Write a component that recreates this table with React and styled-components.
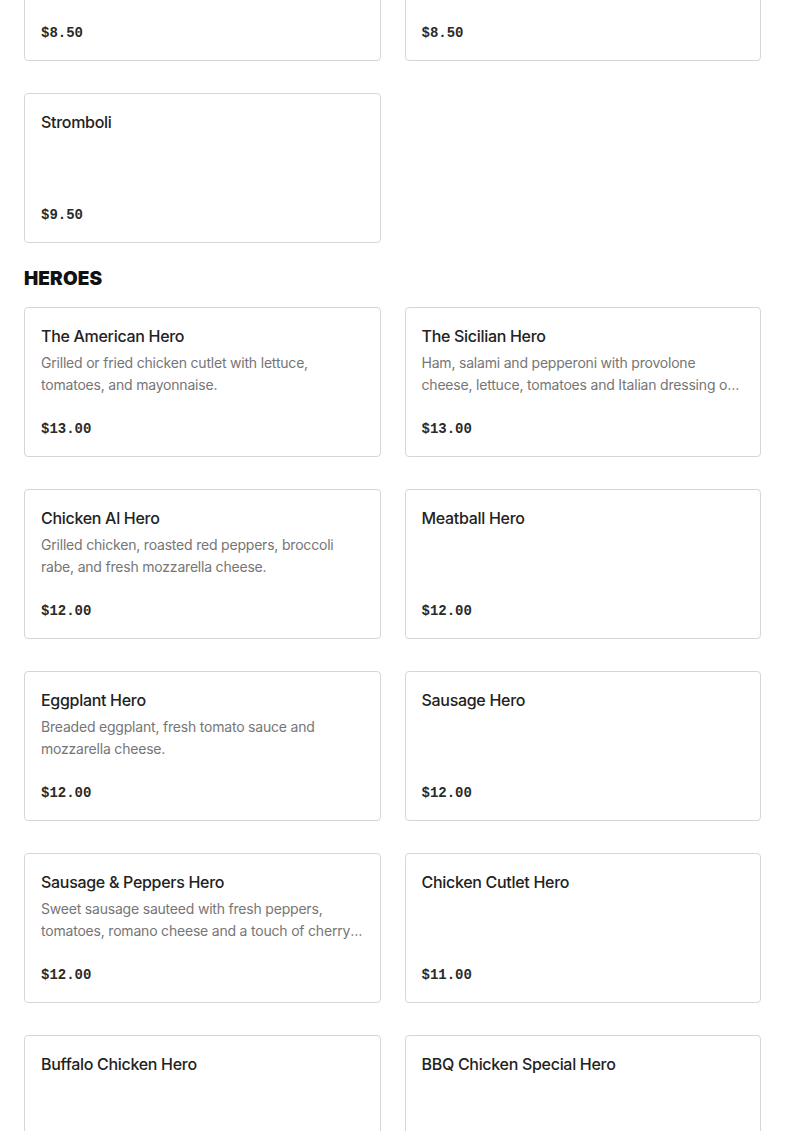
import React from "react";
import styled, { createGlobalStyle } from "styled-components";

const Global = createGlobalStyle`
  html, body { margin: 0; padding: 0; background: #fff; }
  body { font-family: Inter, "Noto Sans", sans-serif; color: #222; }
  * { box-sizing: border-box; }
`;

const Page = styled.div`
  padding: 0 24px;
  margin-top: -89px;
`;

const Section = styled.section`
  display: flex;
  flex-direction: column;
`;

const SectionTitle = styled.h2`
  margin: 22px 0 14px;
  font-family: Inter, "Liberation Sans", sans-serif;
  font-size: 19px;
  line-height: 28px;
  font-weight: 900;
  letter-spacing: 0.1px;
  text-transform: uppercase;
  color: #111;
`;

const Grid = styled.div`
  display: grid;
  grid-template-columns: 1fr 1fr;
  column-gap: 24px;
  row-gap: 32px;
`;

const Card = styled.div`
  height: 150px;
  border: 1px solid #d6d6d6;
  border-radius: 4px;
  padding: 16px;
  display: flex;
  flex-direction: column;
  background: #fff;
`;

const Name = styled.div`
  font-size: 16px;
  line-height: 24px;
  font-weight: 500;
  letter-spacing: -0.3px;
  color: #222;
`;

const Desc = styled.div`
  margin-top: 4px;
  font-size: 14px;
  line-height: 22px;
  letter-spacing: -0.2px;
  color: #767676;
  display: -webkit-box;
  -webkit-line-clamp: 2;
  -webkit-box-orient: vertical;
  overflow: hidden;
`;

const Price = styled.div`
  margin-top: auto;
  font-family: "Liberation Mono", "DejaVu Sans Mono", monospace;
  font-weight: 700;
  font-size: 14px;
  line-height: 22px;
  color: #2a2a2a;
`;

const prev = [
  { name: "Calzone", price: "$8.50" },
  { name: "Garlic Knots", price: "$8.50" },
  { name: "Stromboli", price: "$9.50" },
];

const heroes = [
  { name: "The American Hero", desc: "Grilled or fried chicken cutlet with lettuce, tomatoes, and mayonnaise.", price: "$13.00" },
  { name: "The Sicilian Hero", desc: "Ham, salami and pepperoni with provolone cheese, lettuce, tomatoes and Italian dressing on a hero.", price: "$13.00" },
  { name: "Chicken Al Hero", desc: "Grilled chicken, roasted red peppers, broccoli rabe, and fresh mozzarella cheese.", price: "$12.00" },
  { name: "Meatball Hero", price: "$12.00" },
  { name: "Eggplant Hero", desc: "Breaded eggplant, fresh tomato sauce and mozzarella cheese.", price: "$12.00" },
  { name: "Sausage Hero", price: "$12.00" },
  { name: "Sausage & Peppers Hero", desc: "Sweet sausage sauteed with fresh peppers, tomatoes, romano cheese and a touch of cherry peppers.", price: "$12.00" },
  { name: "Chicken Cutlet Hero", price: "$11.00" },
  { name: "Buffalo Chicken Hero", price: "$12.00" },
  { name: "BBQ Chicken Special Hero", price: "$12.00" },
];

function Item({ item }) {
  return (
    <Card>
      <Name>{item.name}</Name>
      {item.desc && <Desc>{item.desc}</Desc>}
      <Price>{item.price}</Price>
    </Card>
  );
}

export default function App() {
  return (
    <>
      <Global />
      <Page>
        <Section>
          <Grid>
            {prev.map((it) => (
              <Item key={it.name} item={it} />
            ))}
          </Grid>
        </Section>
        <Section>
          <SectionTitle>Heroes</SectionTitle>
          <Grid>
            {heroes.map((it) => (
              <Item key={it.name} item={it} />
            ))}
          </Grid>
        </Section>
      </Page>
    </>
  );
}
